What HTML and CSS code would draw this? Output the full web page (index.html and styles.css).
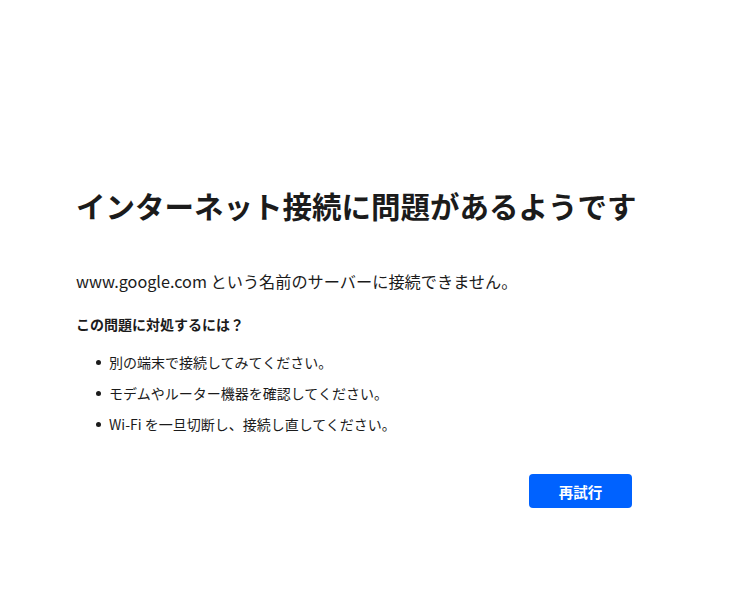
FILE: index.html
```html
<!DOCTYPE html>
<html lang="ja">
<head>
    <meta charset="UTF-8">
    <meta name="viewport" content="width=device-width, initial-scale=1.0">
    <title>接続できません</title>
    <link rel="stylesheet" href="styles.css">
</head>
<body>
    <div class="container">
        <h1 class="title">インターネット接続に問題があるようです</h1>
        <p class="message">www.google.com という名前のサーバーに接続できません。</p>
        <h2 class="subtitle">この問題に対処するには？</h2>
        <ul class="tips">
            <li>別の端末で接続してみてください。</li>
            <li>モデムやルーター機器を確認してください。</li>
            <li>Wi-Fi を一旦切断し、接続し直してください。</li>
        </ul>
        <div class="actions">
            <button class="retry-button">再試行</button>
        </div>
    </div>
</body>
</html>
```

FILE: styles.css
```css
* {
    margin: 0;
    padding: 0;
    box-sizing: border-box;
}

body {
    font-family: "Noto Sans CJK JP", "Noto Sans", sans-serif;
    background: #ffffff;
    color: #1b1b1b;
}

.container {
    width: 556px;
    margin-left: 76px;
    padding-top: 183px;
}

.title {
    font-size: 29.5px;
    font-weight: 700;
    line-height: 44px;
    white-space: nowrap;
    margin-bottom: 42px;
}

.message {
    font-size: 16.2px;
    line-height: 24px;
    margin-bottom: 20px;
}

.subtitle {
    font-size: 14px;
    font-weight: 700;
    line-height: 22px;
    margin-bottom: 17px;
}

.tips {
    list-style: none;
    padding-left: 20px;
}

.tips li {
    font-size: 14px;
    line-height: 20px;
    margin-bottom: 11px;
    display: flex;
    align-items: center;
}

.tips li::before {
    content: "";
    width: 5px;
    height: 5px;
    border-radius: 50%;
    background: #1b1b1b;
    margin-right: 8px;
}

.actions {
    display: flex;
    justify-content: flex-end;
    margin-top: 40px;
}

.retry-button {
    width: 103px;
    height: 34px;
    background: #0062ff;
    color: white;
    border: none;
    border-radius: 4px;
    font-family: inherit;
    font-size: 14.5px;
    font-weight: 700;
    cursor: pointer;
}
```
